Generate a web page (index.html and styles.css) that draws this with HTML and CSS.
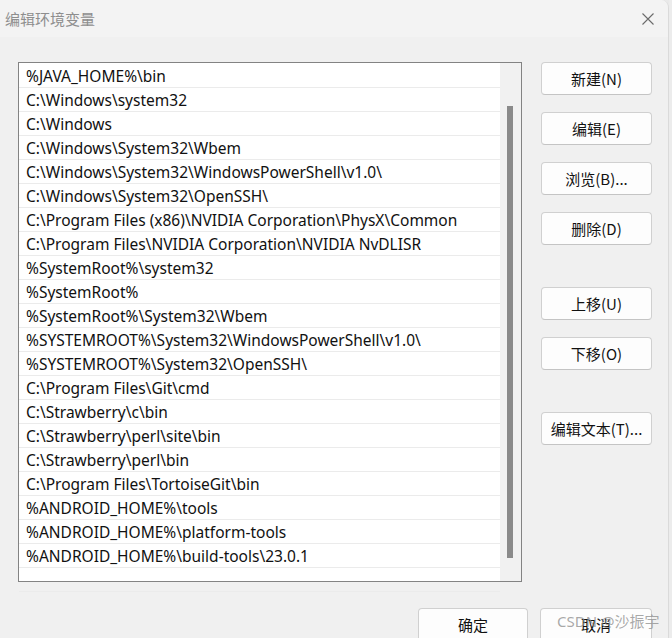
FILE: index.html
```html
<!DOCTYPE html>
<html lang="zh-CN">
<head>
<meta charset="utf-8">
<title>编辑环境变量</title>
<link rel="stylesheet" href="styles.css">
</head>
<body>
<div class="window">
  <div class="titlebar">
    <span class="title">编辑环境变量</span>
    <svg class="close" width="12" height="12" viewBox="0 0 12 12"><path d="M0.5 0.5 L11.5 11.5 M11.5 0.5 L0.5 11.5" stroke="#6b6b6b" stroke-width="1.1" fill="none"/></svg>
  </div>
  <div class="content">
    <div class="main">
      <div class="listbox">
        <ul class="list">
          <li>%JAVA_HOME%\bin</li>
          <li>C:\Windows\system32</li>
          <li>C:\Windows</li>
          <li>C:\Windows\System32\Wbem</li>
          <li>C:\Windows\System32\WindowsPowerShell\v1.0\</li>
          <li>C:\Windows\System32\OpenSSH\</li>
          <li>C:\Program Files (x86)\NVIDIA Corporation\PhysX\Common</li>
          <li>C:\Program Files\NVIDIA Corporation\NVIDIA NvDLISR</li>
          <li>%SystemRoot%\system32</li>
          <li>%SystemRoot%</li>
          <li>%SystemRoot%\System32\Wbem</li>
          <li>%SYSTEMROOT%\System32\WindowsPowerShell\v1.0\</li>
          <li>%SYSTEMROOT%\System32\OpenSSH\</li>
          <li>C:\Program Files\Git\cmd</li>
          <li>C:\Strawberry\c\bin</li>
          <li>C:\Strawberry\perl\site\bin</li>
          <li>C:\Strawberry\perl\bin</li>
          <li>C:\Program Files\TortoiseGit\bin</li>
          <li>%ANDROID_HOME%\tools</li>
          <li>%ANDROID_HOME%\platform-tools</li>
          <li>%ANDROID_HOME%\build-tools\23.0.1</li>
          <li class="empty"></li>
        </ul>
        <div class="scrollbar"><div class="thumb"></div></div>
      </div>
      <div class="side">
        <div class="group">
          <button class="btn">新建(N)</button>
          <button class="btn">编辑(E)</button>
          <button class="btn">浏览(B)...</button>
          <button class="btn">删除(D)</button>
        </div>
        <div class="group">
          <button class="btn">上移(U)</button>
          <button class="btn">下移(O)</button>
        </div>
        <div class="group">
          <button class="btn">编辑文本(T)...</button>
        </div>
      </div>
    </div>
    <div class="footer">
      <button class="btn ok">确定</button>
      <button class="btn cancel">取消</button>
    </div>
  </div>
  <div class="watermark">CSDN @沙振宇</div>
</div>
<div class="edge"></div>
</body>
</html>
```
FILE: styles.css
```css
* { box-sizing: border-box; }
html, body { margin: 0; padding: 0; }
body {
  width: 672px;
  height: 638px;
  overflow: hidden;
  display: flex;
  background: #e9e9e9;
  font-family: "Noto Sans", "Noto Sans CJK SC", sans-serif;
  font-size: 15px;
  color: #000;
}
.window {
  position: relative;
  width: 669px;
  height: 638px;
  background: #f0f0f0;
  border-top-right-radius: 8px;
  border-right: 1px solid #dadada;
  overflow: hidden;
  display: flex;
  flex-direction: column;
}
.titlebar {
  height: 37px;
  flex: none;
  background: #f3f3f3;
  display: flex;
  align-items: center;
  justify-content: space-between;
  padding: 0 14px 0 5px;
}
.title {
  color: #8e8e8e;
  font-family: "Noto Sans CJK SC", sans-serif;
  font-size: 15px;
  line-height: 1;
}
.close { display: block; margin-top: 1px; }
.content {
  padding: 25px 16px 0 18px;
  display: flex;
  flex-direction: column;
}
.main { display: flex; }
.listbox {
  width: 504px;
  height: 520px;
  border: 1px solid #838383;
  background: #fff;
  display: flex;
}
.list {
  list-style: none;
  margin: 0;
  padding: 1px 0 0 0;
  flex: 1;
}
.list li {
  height: 24px;
  line-height: 24px;
  padding-left: 7px;
  border-bottom: 1px solid #ebebeb;
  white-space: nowrap;
  font-family: "Noto Sans", sans-serif;
  font-size: 15.5px;
  color: #111;
}
.scrollbar {
  width: 21px;
  flex: none;
  background: #f1f1f1;
  padding: 43px 0 0 7px;
}
.thumb {
  width: 6px;
  height: 452px;
  background: #8a8a8a;
}
.side {
  margin-left: 19px;
  display: flex;
  flex-direction: column;
  gap: 42px;
}
.group {
  display: flex;
  flex-direction: column;
  gap: 17px;
}
.btn {
  width: 111px;
  height: 33px;
  background: #fdfdfd;
  border: 1px solid #d0d0d0;
  border-bottom-color: #c4c4c4;
  border-radius: 4px;
  font-family: "Noto Sans CJK SC", sans-serif;
  font-size: 15px;
  color: #111;
  padding: 0;
  line-height: 1;
}
.footer {
  margin-top: 26px;
  display: flex;
  justify-content: flex-end;
  gap: 12px;
}
.footer .ok { width: 110px; }
.footer .cancel { width: 112px; }
.watermark {
  position: absolute;
  left: 557px;
  top: 610px;
  font-family: "Noto Sans", "Noto Sans CJK SC", sans-serif;
  font-size: 15px;
  color: rgba(140, 140, 140, 0.75);
  white-space: nowrap;
}
.edge {
  width: 3px;
  height: 638px;
  background: #ececec;
}
```
